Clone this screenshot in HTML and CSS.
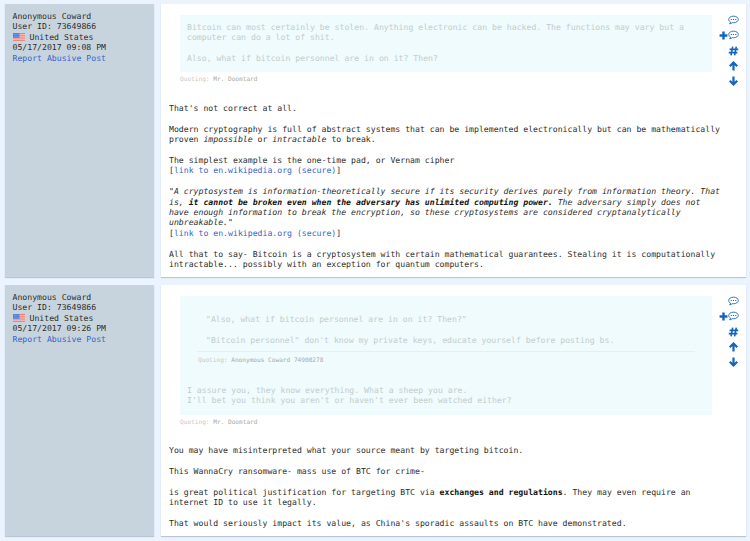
FILE: index.html
```html
<!DOCTYPE html>
<html lang="en">
<head>
<meta charset="utf-8">
<title>Forum thread</title>
<link rel="stylesheet" href="styles.css">
</head>
<body>
<svg class="defs" aria-hidden="true">
  <symbol id="chat" viewBox="0 0 20 18"><path d="M10 2C5 2 1.300 4.700 1.300 8c0 2 1.200 3.800 3.300 4.900-.2 1.200-.8 2.100-1.700 3 2-.1 3.700-.9 4.900-2.100.7.1 1.400.2 2.200.2 5 0 8.700-2.700 8.700-6S15 2 10 2z" fill="none" stroke="currentColor" stroke-width="1.600"/><path d="M5 7h2v2H5zM9 7h2v2H9zM13 7h2v2h-2z" fill="currentColor"/></symbol>
  <symbol id="plus" viewBox="0 0 16 16"><path d="M8 1v14M1 8h14" stroke="currentColor" stroke-width="4.300" fill="none"/></symbol>
  <symbol id="hash" viewBox="0 0 18 18"><path d="M7.500 1 4.500 17M14 1l-3 16M2 6h15.500M.5 12H16" stroke="currentColor" stroke-width="2.900" fill="none"/></symbol>
  <symbol id="up" viewBox="0 0 18 18"><path d="M9 17V3M2.300 9.500 9 2.800l6.700 6.700" stroke="currentColor" stroke-width="4" fill="none"/></symbol>
  <symbol id="down" viewBox="0 0 18 18"><path d="M9 1v14M2.300 8.500 9 15.200l6.700-6.700" stroke="currentColor" stroke-width="4" fill="none"/></symbol>
  <symbol id="flag" viewBox="0 0 12 8"><path fill="#f4c6c3" d="M0 0h12v8H0z"/><path d="M0 .6h12M0 2.800h12M0 5h12M0 7.300h12" stroke="#e8796f"/><path fill="#5385df" d="M0 0h6.500v4.800H0z"/><path d="M1 1.500h5M1 3.300h5" stroke="#9dbbed" stroke-width=".5" stroke-dasharray=".6 .7"/></symbol>
</svg>
<main class="thread">
  <article class="post first">
    <aside class="author">
      <div>Anonymous Coward</div>
      <div>User ID: 73649866</div>
      <div class="country"><svg class="flag"><use href="#flag"/></svg>United States</div>
      <div>05/17/2017 09:08 PM</div>
      <a>Report Abusive Post</a>
    </aside>
    <section class="content">
      <nav class="tools">
        <span><svg><use href="#chat"/></svg></span>
        <span><svg class="plus"><use href="#plus"/></svg><svg><use href="#chat"/></svg></span>
        <span><svg><use href="#hash"/></svg></span>
        <span><svg><use href="#up"/></svg></span>
        <span><svg><use href="#down"/></svg></span>
      </nav>
      <blockquote class="quote">Bitcoin can most certainly be stolen. Anything electronic can be hacked. The functions may vary but a
computer can do a lot of shit.

Also, what if bitcoin personnel are in on it? Then?</blockquote>
      <div class="source">Quoting: <b>Mr. Doomtard</b></div>
      <div class="message">That's not correct at all.

Modern cryptography is full of abstract systems that can be implemented electronically but can be mathematically
proven <i>impossible</i> or <i>intractable</i> to break.

The simplest example is the one-time pad, or Vernam cipher
[<a>link to en.wikipedia.org (secure)</a>]

"<i>A cryptosystem is information-theoretically secure if its security derives purely from information theory. That
is, <b>it cannot be broken even when the adversary has unlimited computing power.</b> The adversary simply does not
have enough information to break the encryption, so these cryptosystems are considered cryptanalytically
unbreakable.</i>"
[<a>link to en.wikipedia.org (secure)</a>]

All that to say- Bitcoin is a cryptosystem with certain mathematical guarantees. Stealing it is computationally
intractable... possibly with an exception for quantum computers.</div>
    </section>
  </article>
  <article class="post second">
    <aside class="author">
      <div>Anonymous Coward</div>
      <div>User ID: 73649866</div>
      <div class="country"><svg class="flag"><use href="#flag"/></svg>United States</div>
      <div>05/17/2017 09:26 PM</div>
      <a>Report Abusive Post</a>
    </aside>
    <section class="content">
      <nav class="tools">
        <span><svg><use href="#chat"/></svg></span>
        <span><svg class="plus"><use href="#plus"/></svg><svg><use href="#chat"/></svg></span>
        <span><svg><use href="#hash"/></svg></span>
        <span><svg><use href="#up"/></svg></span>
        <span><svg><use href="#down"/></svg></span>
      </nav>
      <div class="quote outer"><div class="quote nested">"Also, what if bitcoin personnel are in on it? Then?"

"Bitcoin personnel" don't know my private keys, educate yourself before posting bs.</div><div class="source inner">Quoting: <b>Anonymous Coward 74900278</b></div><div class="reply">I assure you, they know everything. What a sheep you are.
I'll bet you think you aren't or haven't ever been watched either?</div></div>
      <div class="source">Quoting: <b>Mr. Doomtard</b></div>
      <div class="message">You may have misinterpreted what your source meant by targeting bitcoin.

This WannaCry ransomware- mass use of BTC for crime-

is great political justification for targeting BTC via <b>exchanges and regulations</b>. They may even require an
internet ID to use it legally.

That would seriously impact its value, as China's sporadic assaults on BTC have demonstrated.</div>
    </section>
  </article>
</main>
</body>
</html>
```
FILE: styles.css
```css
* { box-sizing: border-box; }
body {
  margin: 0;
  background: #ebf3fe;
  color: #2c2c2c;
  font: 8.185px/10.4px "DejaVu Sans Mono", monospace;
  text-rendering: geometricPrecision;
}
.defs { position: absolute; width: 0; height: 0; }
.thread {
  display: flex;
  flex-direction: column;
  gap: 8px;
  height: 541px;
  padding: 4px 4px 0 5px;
  overflow: hidden;
}
.post { display: grid; grid-template-columns: 149px 585px; gap: 7px; flex: none; }
.first { height: 273px; }
.second { height: 251px; }
.author, .content { box-shadow: 0 1px 1px #b8c6d8; }
.author { padding: 7px 7.5px; background: #c8d4dd; }
.author > * { display: block; height: 10.4px; white-space: nowrap; }
.author > .country { display: flex; align-items: center; }
.flag { width: 12px; height: 8px; margin-right: 5px; }
a { color: #3563c9; }
b { color: #111; }
.content { position: relative; padding: 11px 8px 0; background: #fff; }
.tools {
  position: absolute;
  top: 8.4px;
  right: 7px;
  display: flex;
  flex-direction: column;
  align-items: flex-end;
  color: #1565c0;
}
.tools span { display: flex; align-items: center; height: 15.35px; }
.tools svg { width: 11px; height: 10px; }
.tools .plus { width: 9px; height: 9px; }
.quote, .message, .reply { white-space: pre; }
.quote {
  width: 532px;
  height: 57px;
  margin: 0 0 0 11px;
  padding: 7px 7px 0;
  background: #effbfc;
  color: #c3cccd;
}
.source {
  height: 10px;
  margin: 3px 0 0 11px;
  font-size: 6.13px;
  line-height: 10px;
  color: #c8c8c8;
}
.source b { font-weight: normal; color: #a8a8a8; }
.message { margin-top: 18px; }
.second .message { margin-top: 17px; }
.outer { height: 119px; padding: 11px 17px 0; }
.nested {
  width: 498px;
  height: 45px;
  margin: 0;
  padding: 7px 9px 0;
  border-bottom: 1px solid #e6f0f1;
}
.inner { margin: 4px 0 0 1px; }
.reply { margin: 19px 0 0 -10px; }
```
